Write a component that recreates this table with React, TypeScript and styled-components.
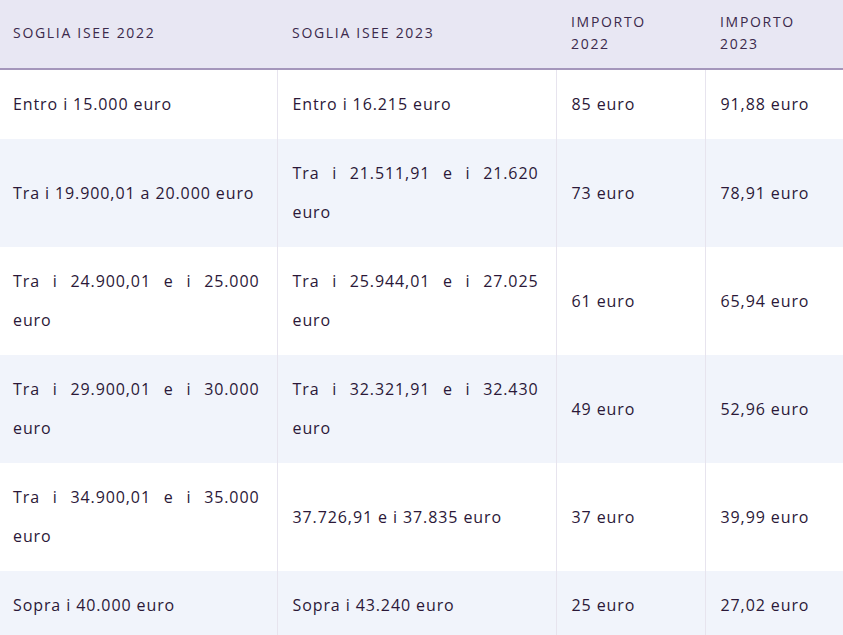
import React from "react";
import styled, { createGlobalStyle } from "styled-components";

const Global = createGlobalStyle`
  html, body { margin: 0; padding: 0; background: #ffffff; }
  body { font-family: "Open Sans", "Noto Sans", sans-serif; color: #2b1838; }
`;

const Table = styled.table`
  width: 843px;
  border-collapse: collapse;
  table-layout: fixed;
`;

const HeadRow = styled.tr`
  background: #e8e7f3;
  border-bottom: 2px solid #a496bb;
`;

const Th = styled.th<{ $w: number }>`
  width: ${(p) => p.$w}px;
  box-sizing: border-box;
  height: 69px;
  padding: 11px 17px 13px 15px;
  text-align: left;
  vertical-align: middle;
  font-weight: 500;
  font-size: 14px;
  line-height: 22px;
  letter-spacing: 1.7px;
  text-transform: uppercase;
  white-space: pre-line;
  color: #3b2a4c;
  &:first-child { padding-left: 13px; }
`;

const Row = styled.tr<{ $alt: boolean }>`
  background: ${(p) => (p.$alt ? "#f1f4fb" : "#ffffff")};
`;

const Td = styled.td`
  padding: 15px 17px 15px 15px;
  font-size: 16px;
  font-weight: 500;
  letter-spacing: 0.9px;
  line-height: 39px;
  vertical-align: middle;
  text-align: justify;
  color: #2b1838;
  &:first-child { padding-left: 13px; }
  & + & { border-left: 1px solid #e7e4ee; }
`;

const cols = [
  { label: "Soglia ISEE 2022", w: 277 },
  { label: "Soglia ISEE 2023", w: 279 },
  { label: "Importo\n2022", w: 149 },
  { label: "Importo\n2023", w: 138 },
];

const rows = [
  ["Entro i 15.000 euro", "Entro i 16.215 euro", "85 euro", "91,88 euro"],
  ["Tra i 19.900,01 a 20.000 euro", "Tra i 21.511,91 e i 21.620 euro", "73 euro", "78,91 euro"],
  ["Tra i 24.900,01 e i 25.000 euro", "Tra i 25.944,01 e i 27.025 euro", "61 euro", "65,94 euro"],
  ["Tra i 29.900,01 e i 30.000 euro", "Tra i 32.321,91 e i 32.430 euro", "49 euro", "52,96 euro"],
  ["Tra i 34.900,01 e i 35.000 euro", "37.726,91 e i 37.835 euro", "37 euro", "39,99 euro"],
  ["Sopra i 40.000 euro", "Sopra i 43.240 euro", "25 euro", "27,02 euro"],
];

export default function App() {
  return (
    <>
      <Global />
      <Table>
        <thead>
          <HeadRow>
            {cols.map((c) => (
              <Th key={c.label} $w={c.w}>{c.label}</Th>
            ))}
          </HeadRow>
        </thead>
        <tbody>
          {rows.map((r, i) => (
            <Row key={i} $alt={i % 2 === 1}>
              {r.map((cell, j) => (
                <Td key={j}>{cell}</Td>
              ))}
            </Row>
          ))}
        </tbody>
      </Table>
    </>
  );
}
